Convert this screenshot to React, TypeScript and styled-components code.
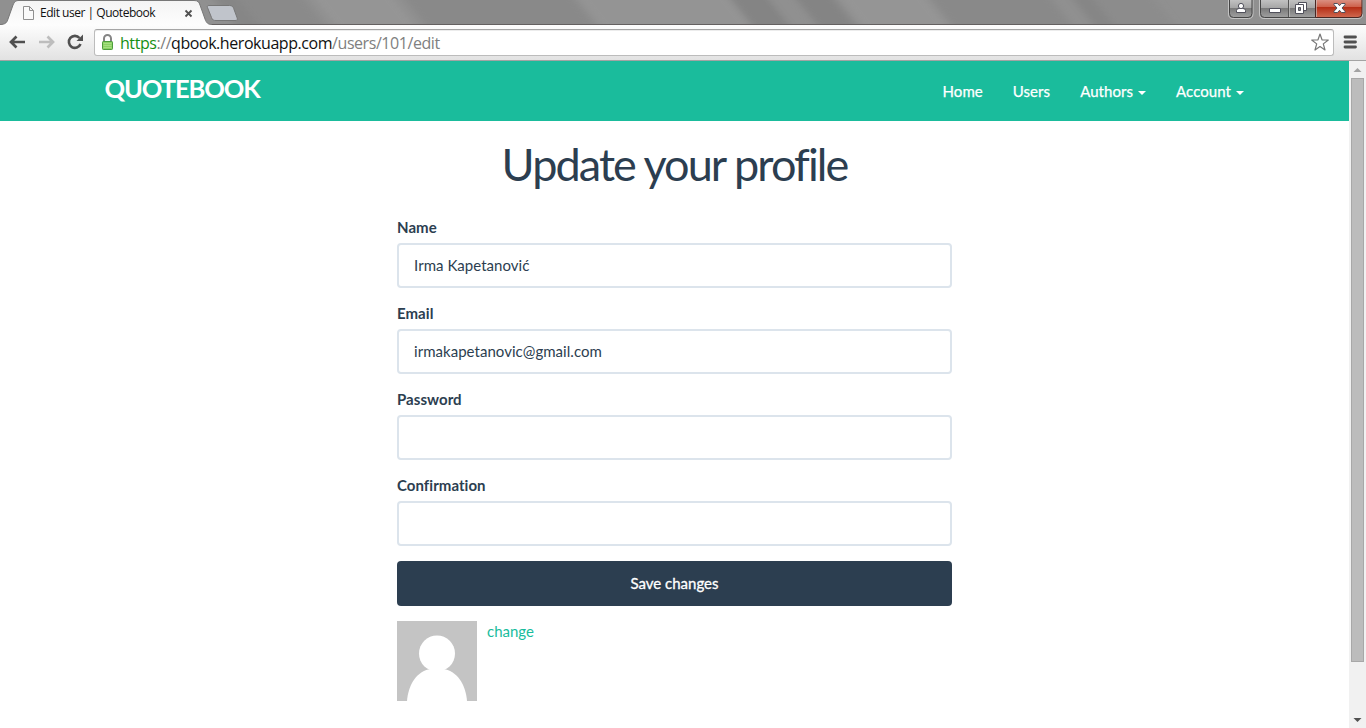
import React from "react";
import styled, { createGlobalStyle } from "styled-components";

const GlobalStyle = createGlobalStyle`
  * { box-sizing: border-box; }
  html, body { margin: 0; height: 100%; overflow: hidden; background: #fff; }
  body { font-family: Lato, "Liberation Sans", sans-serif; font-size: 15px; line-height: 21px; color: #2c3e50; font-variant-ligatures: none; }
`;

const Window = styled.div`
  display: flex;
  flex-direction: column;
  width: 1366px;
  height: 728px;
  overflow: hidden;
`;

const TitleBar = styled.header`
  position: relative;
  display: flex;
  justify-content: space-between;
  height: 25px;
  flex: none;
`;

const Glass = styled.svg`
  position: absolute;
  inset: 0;
`;

const Tab = styled.div`
  position: relative;
  display: flex;
  align-items: center;
  width: 240px;
  padding-left: 23px;
  height: 26px;
`;

const TabTitle = styled.span`
  margin-left: 5px;
  width: 144px;
  font: 12px/26px "Open Sans", "Noto Sans", sans-serif;
  letter-spacing: -0.47px;
  color: #111;
  white-space: nowrap;
`;

const WindowButtons = styled.div`
  position: relative;
  display: flex;
  height: 19px;
  padding-right: 3px;
`;

const Toolbar = styled.div`
  display: flex;
  align-items: center;
  height: 36px;
  flex: none;
  padding: 0 8px 1px 8px;
  background: linear-gradient(#fdfdfd, #e2e2e2);
  border-bottom: 1px solid #a3a3a3;
`;

const NavIcon = styled.svg`
  flex: none;
  margin-right: 10px;
`;

const AddressBar = styled.div`
  display: flex;
  align-items: center;
  flex: none;
  width: 1240px;
  height: 27px;
  margin: 0 9px 0 -2px;
  padding: 0 4px 0 6px;
  background: #fff;
  border: 1px solid #bcbcbc;
  border-top-color: #a5a5a5;
  border-radius: 3px;
  box-shadow: inset 0 1px 0 #ececec;
`;

const Url = styled.span`
  flex: 1;
  margin-left: 6px;
  padding-top: 1px;
  font: 16px/24px "Open Sans", "Noto Sans", sans-serif;
  letter-spacing: -0.44px;
  color: #808080;
  white-space: nowrap;
`;
const Secure = styled.span`color: #168f14;`;
const Host = styled.span`color: #111;`;

const Viewport = styled.div`
  display: flex;
  flex: 1;
  min-height: 0;
`;

const Page = styled.div`
  width: 1349px;
  background: #fff;
`;

const NavBar = styled.nav`
  height: 60px;
  background: #1abc9c;
`;

const Container = styled.div`
  display: flex;
  justify-content: space-between;
  width: 1170px;
  height: 60px;
  margin: 0 auto;
  padding: 0 15px;
`;

const Logo = styled.a`
  font-size: 25.5px;
  line-height: 55px;
  font-weight: 700;
  letter-spacing: -1.1px;
  color: #fff;
`;

const Menu = styled.div`
  display: flex;
  gap: 30px;
  padding-right: 0.5px;
`;

const MenuLink = styled.a`
  display: flex;
  align-items: center;
  height: 61px;
  letter-spacing: 0.06px;
  color: #fff;
  -webkit-text-stroke: 0.25px #fff;
`;

const Caret = styled.span`
  margin: 2px 0 0 5px;
  border: 4px solid transparent;
  border-top-color: #fff;
  border-bottom: 0;
`;

const Heading = styled.h1`
  margin: 18px 0 28px;
  font-size: 45px;
  line-height: 50px;
  font-weight: 400;
  letter-spacing: -1.9px;
  text-align: center;
`;

const Form = styled.form`
  width: 555px;
  margin: 0 auto;
`;

const Label = styled.label`
  display: block;
  height: 26px;
  line-height: 20px;
  font-weight: 700;
  letter-spacing: 0.05px;
`;

const Input = styled.input`
  display: block;
  width: 555px;
  height: 45px;
  margin-bottom: 15px;
  padding: 0 15px 2px;
  font: 15px/21px Lato, "Liberation Sans", sans-serif;
  letter-spacing: 0.04px;
  color: #2c3e50;
  background: #fff;
  border: 2px solid #dce4ec;
  border-radius: 4px;
  outline: 0;
`;

const Submit = styled.button`
  display: block;
  width: 555px;
  height: 45px;
  padding: 0;
  font: 15px/21px Lato, "Liberation Sans", sans-serif;
  color: #fff;
  -webkit-text-stroke: 0.3px #fff;
  background: #2c3e50;
  border: 0;
  border-radius: 4px;
`;

const AvatarRow = styled.div`
  display: flex;
  gap: 10px;
  margin-top: 15px;
`;

const ChangeLink = styled.a`
  color: #18bc9c;
`;

const ScrollBar = styled.div`
  display: flex;
  flex-direction: column;
  align-items: center;
  width: 17px;
  background: #f1f1f1;
`;

const Thumb = styled.div`
  width: 13px;
  height: 584px;
  background: #bcbcbc;
  border: 1px solid #a8a8a8;
`;

const Spacer = styled.div`flex: 1;`;

const streaks: [number, number, string][] = [
  [215, 25, "#868686"], [240, 65, "#8a8a8a"], [315, 80, "#959595"], [405, 170, "#898989"], [580, 150, "#949494"],
  [732, 38, "#848484"], [770, 25, "#909090"], [797, 38, "#848484"], [842, 85, "#959595"],
  [932, 120, "#898989"], [1055, 18, "#909090"], [1073, 22, "#868686"], [1095, 60, "#8c8c8c"],
];

const TitleGlass = () => (
  <Glass width="1366" height="25" viewBox="0 0 1366 25">
    <defs>
      <linearGradient id="tab" x1="0" y1="0" x2="0" y2="1">
        <stop offset="0" stopColor="#f4f4f4" /><stop offset="1" stopColor="#fdfdfd" />
      </linearGradient>
      <filter id="soft" x="-20%" width="140%"><feGaussianBlur stdDeviation="4 0" /></filter>
    </defs>
    <rect width="1366" height="25" fill="#909090" />
    <g filter="url(#soft)">
      {streaks.map(([x, w, c]) => (
        <path key={x} d={`M${x} 0h${w}l20 25h${-w}z`} fill={c} />
      ))}
    </g>
    <path d="M0 24.5H1366" stroke="#646060" />
    <path d="M0 25V24.5C6 24.5 7 22 8 19L13 5C14.500 1.500 16 .5 19 .5H194C198 .5 199 2 200 5L205 19C206.500 23 208 24.500 212 24.500V25Z" fill="url(#tab)" />
    <path d="M0 24.500C6 24.500 7 22 8 19L13 5C14.500 1.500 16 .5 19 .5H194C198 .5 199 2 200 5L205 19C206.500 23 208 24.500 212 24.500" fill="none" stroke="#777" />
    <path d="M209 5.500H229.500C232 5.500 233 6.500 233.700 8.500L237.200 18C237.800 20 237 20.500 235 20.500H216C213.500 20.500 212.300 20 211.500 17.500L207.500 7.500C207 6 207.500 5.500 209 5.500Z" fill="#c0c4cb" stroke="#777" />
  </Glass>
);

const ControlIcons = () => (
  <svg width="135" height="20" viewBox="1228 0 135 20">
    <defs>
      <linearGradient id="btn" x1="0" y1="0" x2="0" y2="1">
        <stop offset="0" stopColor="#c5c5c5" /><stop offset=".46" stopColor="#a7a7a7" />
        <stop offset=".47" stopColor="#777" /><stop offset="1" stopColor="#a0a0a0" />
      </linearGradient>
      <linearGradient id="close" x1="0" y1="0" x2="0" y2="1">
        <stop offset="0" stopColor="#dc9688" /><stop offset=".44" stopColor="#cd5f49" />
        <stop offset=".45" stopColor="#b52e16" /><stop offset="1" stopColor="#d06950" />
      </linearGradient>
    </defs>
    <path d="M1228.500 0V14Q1228.500 18.500 1233 18.500H1248.500Q1253 18.500 1253 14V0M1259.500 0V14Q1259.500 18.500 1264 18.500H1358Q1362.800 18.500 1362.800 14V0" fill="none" stroke="#c3c3c3" />
    <path d="M1229.500-1V13.500Q1229.500 17.500 1233.500 17.500H1248Q1252 17.500 1252 13.500V-1Z" fill="url(#btn)" stroke="#454545" />
    <path d="M1260.500-1V13.500Q1260.500 17.500 1264.500 17.500H1315.500V-1Z" fill="url(#btn)" stroke="#454545" />
    <path d="M1315.500-1V17.500H1358Q1362 17.500 1362 13.500V-1Z" fill="url(#close)" stroke="#4a2723" />
    <path d="M1288.500 0V17" stroke="#555" /><path d="M1289.500 0V17M1316.500 0V17" stroke="#ccc" strokeOpacity=".6" />
    <g fill="#fff" stroke="#50505b" strokeWidth="1">
      <path d="M1236.500 12.500V10.500Q1236.500 8.500 1239 8.500H1243Q1245.500 8.500 1245.500 10.500V12.500Z" />
      <circle cx="1241" cy="6" r="2.600" />
      <path d="M1269.500 8.500H1280.500V12.500H1269.500Z" />
      <path d="M1298.500 2.500H1306.500V10.500H1298.500Z" />
      <path d="M1295.500 4.500H1303.500V13.500H1295.500Z" />
      <path d="M1298.500 7.500H1300.500V10.500H1298.500Z" fill="#888" />
      <path d="M1334 3.500H1337.500L1339.500 5.700L1341.500 3.500H1345V4.700L1342 8L1345 11.300V12.500H1341.500L1339.500 10.300L1337.500 12.500H1334V11.300L1337 8L1334 4.700Z" />
    </g>
  </svg>
);

const fields = [
  { label: "Name", value: "Irma Kapetanović", type: "text" },
  { label: "Email", value: "irmakapetanovic@gmail.com", type: "text" },
  { label: "Password", value: "", type: "password" },
  { label: "Confirmation", value: "", type: "password" },
];

export default function App() {
  return (
    <Window>
      <GlobalStyle />
      <TitleBar>
        <TitleGlass />
        <Tab>
          <svg width="12" height="14" viewBox="0 0 12 14">
            <path d="M.5.5H6.500L10.500 4.500V13.500H.5ZM6.500.5V4.500H10.500" fill="#fafafa" stroke="#909090" />
          </svg>
          <TabTitle>Edit user | Quotebook</TabTitle>
          <svg width="9" height="9" viewBox="0 0 9 9"><path d="M1.500 1.500L7.500 7.500M7.500 1.500L1.500 7.500" stroke="#505050" strokeWidth="1.800" /></svg>
        </Tab>
        <WindowButtons><ControlIcons /></WindowButtons>
      </TitleBar>
      <Toolbar>
        <NavIcon width="19" height="16" viewBox="0 0 19 16"><path d="M17 8H4M8.500 2.500L3 8L8.500 13.500" fill="none" stroke="#505050" strokeWidth="2.700" /></NavIcon>
        <NavIcon width="19" height="16" viewBox="0 0 19 16"><path d="M2 8H15M10.500 2.500L16 8L10.500 13.500" fill="none" stroke="#bdbdbd" strokeWidth="2.700" /></NavIcon>
        <NavIcon width="20" height="18" viewBox="0 0 20 18"><path d="M14.500 11A6 6 0 1 1 13.500 5" fill="none" stroke="#505050" strokeWidth="2.600" /><path d="M17 1.500V8H10.500Z" fill="#505050" /></NavIcon>
        <AddressBar>
          <svg width="13" height="17" viewBox="0 0 13 17">
            <path d="M3 8V4.500A3.500 3.500 0 0 1 10 4.500V8" fill="none" stroke="#858585" strokeWidth="2" />
            <rect x="1.500" y="7.500" width="10" height="8" rx=".8" fill="#8bd163" stroke="#4c9c3d" />
            <path d="M2.500 9.500H10.500M2.500 11.500H10.500M2.500 13.500H10.500" stroke="#a5df82" />
          </svg>
          <Url><Secure>https</Secure>://<Host>qbook.herokuapp.com</Host>/users/101/edit</Url>
          <svg width="18" height="18" viewBox="0 0 18 18"><path d="M9 1L11 6.800L17.300 7L12.300 10.900L14 17L9 13.500L4 17L5.700 10.900L.7 7L7 6.800Z" fill="#fff" stroke="#777" strokeWidth="1.200" strokeLinejoin="round" /></svg>
        </AddressBar>
        <svg width="14" height="14" viewBox="0 0 14 14"><path d="M2 2H12.500M2 7H12.500M2 12H12.500" stroke="#505050" strokeWidth="2.800" strokeLinecap="round" /></svg>
      </Toolbar>
      <Viewport>
        <Page>
          <NavBar>
            <Container>
              <Logo>QUOTEBOOK</Logo>
              <Menu>
                <MenuLink>Home</MenuLink>
                <MenuLink>Users</MenuLink>
                <MenuLink>Authors<Caret /></MenuLink>
                <MenuLink>Account<Caret /></MenuLink>
              </Menu>
            </Container>
          </NavBar>
          <Heading>Update your profile</Heading>
          <Form>
            {fields.map((f) => (
              <React.Fragment key={f.label}>
                <Label>{f.label}</Label>
                <Input type={f.type} defaultValue={f.value} />
              </React.Fragment>
            ))}
            <Submit type="button">Save changes</Submit>
            <AvatarRow>
              <svg width="80" height="80" viewBox="0 0 80 80">
                <rect width="80" height="80" fill="#c4c4c4" />
                <circle cx="40" cy="32.500" r="18" fill="#fff" />
                <path d="M10 80C11 66 18 52 31 48.500H49C62 52 69 66 70 80Z" fill="#fff" />
              </svg>
              <ChangeLink>change</ChangeLink>
            </AvatarRow>
          </Form>
        </Page>
        <ScrollBar>
          <svg width="17" height="17" viewBox="0 0 17 17"><path d="M4.500 11L8.500 7L12.500 11Z" fill="#a3a3a3" /></svg>
          <Thumb />
          <Spacer />
          <svg width="17" height="17" viewBox="0 0 17 17"><path d="M4.500 7L8.500 11L12.500 7Z" fill="#505050" /></svg>
        </ScrollBar>
      </Viewport>
    </Window>
  );
}
